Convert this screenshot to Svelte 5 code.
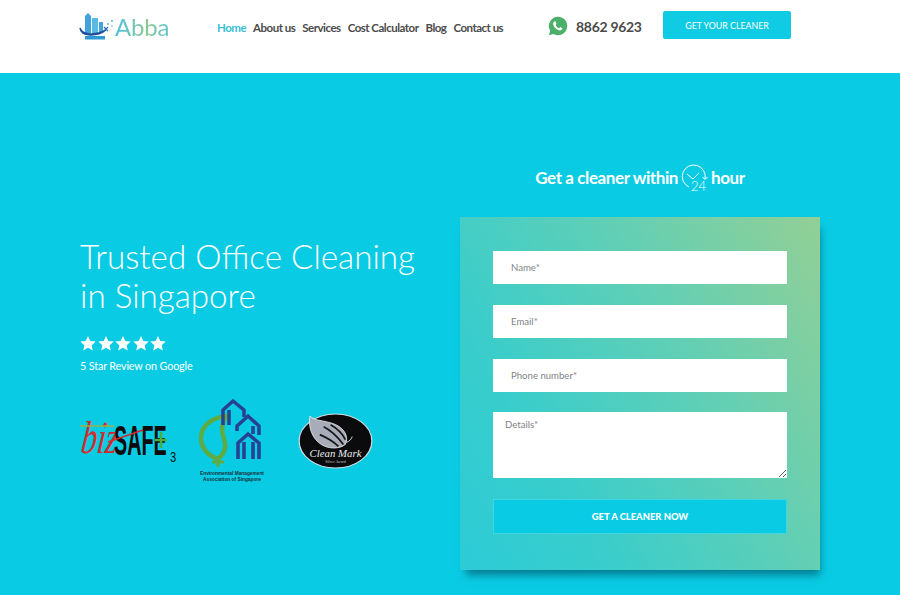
<script lang="ts">
  const nav = ['Home', 'About us', 'Services', 'Cost Calculator', 'Blog', 'Contact us'];
  const stars = [0, 1, 2, 3, 4];
</script>

<div class="page">
  <header class="topbar">
    <a class="logo" href="#top">
      <svg width="35" height="30" viewBox="0 0 35 30">
        <path d="M5 22V5l3-3 3 3v17z" fill="#3fa4dc" />
        <rect x="12" y="7" width="6" height="15" fill="#5cb8e4" />
        <rect x="19" y="11" width="4" height="11" fill="#3fa4dc" />
        <path d="M0 17c2 7 15 8 26 2-9 7-25 7-26-2z" fill="#1f4e9c" stroke="#1f4e9c" stroke-width="1.500" />
        <rect x="5" y="25" width="20" height="3.500" fill="#2f9ad6" />
        <path d="M24 16l4 4m0-4l-4 4" stroke="#2a6fb5" stroke-width="1.200" />
        <circle cx="28" cy="13" r="1" fill="#5cb8e4" />
        <circle cx="32" cy="10" r="1.100" fill="#5cb8e4" />
        <circle cx="32" cy="15" r="0.800" fill="#5cb8e4" />
      </svg>
      <span class="logo-text">Abba</span>
    </a>
    <nav class="nav">
      {#each nav as item, i}
        <a href="#top" class:active={i === 0}>{item}</a>
      {/each}
    </nav>
    <div class="phone">
      <svg width="20" height="20" viewBox="0 0 24 24">
        <path d="M12 1a11 11 0 0 0-9.400 16.600L1 23l5.600-1.500A11 11 0 1 0 12 1z" fill="#4caf6a" />
        <path d="M8.300 6.300c-.4 0-1 .2-1.400.8-.5.7-.9 1.500-.8 2.600.2 1.700 1.200 3.300 2.500 4.700 1.500 1.500 3.300 2.600 5.200 2.900 1.300.2 2.400-.3 3-1 .5-.6.600-1.300.5-1.700l-2.600-1.300-1.300 1.500c-1.800-.6-3.600-2.300-4.300-4.100l1.100-1.200-1-2.900z" fill="#fff" />
      </svg>
      <span>8862 9623</span>
    </div>
    <a class="cta" href="#top">GET YOUR CLEANER</a>
  </header>

  <main class="hero">
    <section class="intro">
      <h1>Trusted Office Cleaning<br />in Singapore</h1>
      <div class="stars">
        {#each stars as s (s)}
          <svg width="16" height="15" viewBox="0 0 24 23">
            <path d="M12 0l3.500 7.500 8.300 1-6.100 5.600 1.600 8.100L12 18.200l-7.300 4 1.600-8.100L.2 8.500l8.300-1z" fill="#fff" />
          </svg>
        {/each}
      </div>
      <p class="review">5 Star Review on Google</p>
      <div class="badges">
        <svg class="bizsafe" width="100" height="50" viewBox="0 0 100 50">
          <text transform="translate(0 37) scale(.68 1) skewX(-10)" class="biz">biz</text>
          <text transform="translate(34 39) scale(.47 1)" class="safe">SAFE</text>
          <text transform="translate(90 46) scale(.8 1)" class="three">3</text>
          <path d="M0 10h34" stroke="#9bb24a" stroke-width="1.500" />
          <path d="M28 26L63 14" stroke="#d42a2a" stroke-width="1.500" />
          <path d="M75 24h12M81 16v16" stroke="#4cae3c" stroke-width="2.500" />
        </svg>
        <div class="emas">
          <svg width="62" height="72" viewBox="0 0 62 72">
            <path d="M27 18C12 20 2 28 2 40c0 11 8 18 17 21 6-5 9-12 6-20-3-8-3-15 2-23z" fill="none" stroke="#5cab45" stroke-width="4.500" />
            <path d="M19 61v8M13 64h12" fill="none" stroke="#5cab45" stroke-width="3" />
            <path d="M24 27V12L34 3l11 9v7M30 27V12" fill="none" stroke="#27408f" stroke-width="3.500" />
            <path d="M38 33V28L49 18l11 10v9M54 28v8" fill="none" stroke="#27408f" stroke-width="3.500" />
            <path d="M39 61V45L49 36l11 9v16M45 61V44M54 61V44" fill="none" stroke="#27408f" stroke-width="3.500" />
          </svg>
          <span class="emas-text">Environmental Management<br />Association of Singapore</span>
        </div>
        <svg class="cleanmark" width="75" height="56" viewBox="0 0 76 57">
          <ellipse cx="38" cy="28.500" rx="37" ry="27.500" fill="#0b0b0d" stroke="#d5dcdf" stroke-width="1.200" />
          <path d="M12 3c4 6 20 4 30 11 7 5 9 12 6 18-6 5-18 5-26-1C14 25 10 14 12 3z" fill="#a7acb8" stroke="#eef0f3" stroke-width="0.800" />
          <path d="M26 14c8 4 14 10 20 18M33 12c7 4 12 9 15 15M22 22c7 3 14 7 19 12" stroke="#17171b" stroke-width="1.800" fill="none" />
          <path d="M49 30c3-1 5-3 6-6" stroke="#d5dcdf" stroke-width="1" fill="none" />
          <text x="38" y="45" class="cm">Clean Mark</text>
          <text x="38" y="51" class="cm-sub">Silver Award</text>
        </svg>
      </div>
    </section>

    <section class="quote">
      <h2>
        <span>Get a cleaner within</span>
        <svg width="27" height="28" viewBox="0 0 27 28">
          <path d="M8 23A11.500 11.500 0 1 1 24 15M21.500 13l2.500 2.500 2.500-2.500" fill="none" stroke="#fff" stroke-width="1" />
          <path d="M6 10l6 5 6-6" fill="none" stroke="#fff" stroke-width="1" />
          <text x="10" y="27" class="clock-num">24</text>
        </svg>
        <span>hour</span>
      </h2>
      <form class="card">
        <input type="text" placeholder="Name*" />
        <input type="email" placeholder="Email*" />
        <input type="tel" placeholder="Phone number*" />
        <textarea placeholder="Details*"></textarea>
        <button type="button">GET A CLEANER NOW</button>
      </form>
    </section>
  </main>
</div>

<style>
  :global(body) {
    margin: 0;
    font-family: Lato, "Liberation Sans", sans-serif;
  }

  svg {
    overflow: visible;
  }

  .page {
    width: 900px;
    height: 595px;
    overflow: hidden;
    display: flex;
    flex-direction: column;
    background: #0acbe4;
  }

  .topbar {
    height: 73px;
    flex-shrink: 0;
    box-sizing: border-box;
    background: #fff;
    padding: 11px 109px 0 80px;
    display: flex;
    align-items: flex-start;
  }

  .logo {
    width: 137px;
    flex-shrink: 0;
    display: flex;
    align-items: flex-end;
    text-decoration: none;
    height: 30px;
  }

  .logo-text {
    font-size: 24px;
    font-weight: 400;
    line-height: 28px;
    letter-spacing: -0.2px;
    background: linear-gradient(90deg, #4cc0dc, #8ac98f 60%, #5cc4cf);
    -webkit-background-clip: text;
    background-clip: text;
    color: transparent;
  }

  .nav {
    display: flex;
    gap: 7px;
    padding-top: 9px;
    width: 331px;
    flex-shrink: 0;
  }

  .nav a {
    font-size: 11.500px;
    line-height: 16px;
    font-weight: 700;
    letter-spacing: -0.5px;
    color: #4b4b4b;
    text-decoration: none;
    white-space: nowrap;
  }

  .nav a.active {
    color: #3dbfd6;
  }

  .phone {
    display: flex;
    align-items: center;
    gap: 8px;
    width: 115px;
    flex-shrink: 0;
    height: 30px;
    font-size: 14px;
    font-weight: 700;
    letter-spacing: -0.3px;
    color: #4a4a4a;
  }

  .cta {
    width: 128px;
    height: 28px;
    flex-shrink: 0;
    display: flex;
    align-items: center;
    justify-content: center;
    border-radius: 2px;
    background: #0fcbe3;
    color: #fff;
    font-size: 8.800px;
    text-decoration: none;
  }

  .hero {
    flex: 1;
    display: flex;
    align-items: flex-start;
    padding: 0 80px;
  }

  .intro {
    width: 380px;
    flex-shrink: 0;
    padding-top: 164px;
    color: #fff;
  }

  h1 {
    margin: 0;
    font-family: Lato, sans-serif;
    font-weight: 300;
    font-size: 33.200px;
    line-height: 39px;
    white-space: nowrap;
  }

  .stars {
    display: flex;
    gap: 1.500px;
    margin-top: 21px;
    height: 15px;
  }

  .review {
    margin: 8px 0 0;
    font-size: 10.800px;
    line-height: 14px;
    letter-spacing: -0.15px;
  }

  .badges {
    display: flex;
    align-items: flex-start;
    margin-top: 25px;
  }

  .bizsafe {
    margin-top: 18px;
    flex-shrink: 0;
  }

  .biz {
    font-family: "Liberation Serif", serif;
    font-style: italic;
    font-size: 46px;
    fill: #d42a2a;
  }

  .safe {
    font-family: "Liberation Sans", sans-serif;
    font-weight: 700;
    font-size: 42px;
    fill: #0c0c0c;
  }

  .three {
    font-family: "Liberation Sans", sans-serif;
    font-size: 14px;
    fill: #111;
  }

  .emas {
    width: 66px;
    margin-left: 19px;
    display: flex;
    flex-direction: column;
    align-items: center;
    flex-shrink: 0;
  }

  .emas svg {
    align-self: flex-start;
  }

  .emas-text {
    margin-top: 1px;
    font-family: "Liberation Sans", sans-serif;
    font-size: 4.800px;
    line-height: 6px;
    font-weight: 700;
    color: #14323a;
    text-align: center;
    white-space: nowrap;
  }

  .cleanmark {
    margin: 15px 0 0 33px;
    flex-shrink: 0;
  }

  .cm {
    font-family: "Liberation Serif", serif;
    font-style: italic;
    font-size: 11px;
    fill: #e8eaec;
    text-anchor: middle;
  }

  .cm-sub {
    font-family: "Liberation Serif", serif;
    font-size: 4px;
    fill: #c8ccd0;
    text-anchor: middle;
  }

  .quote {
    width: 360px;
    flex-shrink: 0;
  }

  h2 {
    margin: 0;
    height: 144px;
    padding-top: 91px;
    box-sizing: border-box;
    display: flex;
    justify-content: center;
    align-items: flex-start;
    gap: 3px;
    color: #fff;
    font-family: Lato, sans-serif;
    font-size: 17px;
    line-height: 28px;
    font-weight: 700;
    letter-spacing: -0.4px;
    white-space: nowrap;
  }

  .clock-num {
    font-family: Lato, sans-serif;
    font-size: 13px;
    font-weight: 300;
    fill: #fff;
    letter-spacing: 0;
  }

  .card {
    height: 353px;
    box-sizing: border-box;
    padding: 34px 33px 0;
    display: flex;
    flex-direction: column;
    gap: 21px;
    background: linear-gradient(240deg, #93cf96 0%, #5fcfb6 40%, #38cdcc 75%, #2ccbd6 100%);
    box-shadow: 3px 8px 8px -3px rgba(0, 70, 90, 0.6);
  }

  input,
  textarea {
    display: block;
    width: 294px;
    box-sizing: border-box;
    border: 0;
    margin: 0;
    background: #fff;
    padding: 0 18px;
    font-family: Lato, sans-serif;
    font-size: 9.600px;
    color: #555;
  }

  input {
    height: 33px;
  }

  textarea {
    height: 66px;
    margin-top: -1px;
    padding: 7px 12px 0;
  }

  input::placeholder,
  textarea::placeholder {
    color: #808488;
    opacity: 1;
  }

  button {
    width: 294px;
    height: 35px;
    box-sizing: border-box;
    border: 1px solid #3fd6e2;
    background: #0acbe4;
    color: #fff;
    font-family: Lato, sans-serif;
    font-weight: 900;
    font-size: 9.400px;
    padding: 0;
  }
</style>
